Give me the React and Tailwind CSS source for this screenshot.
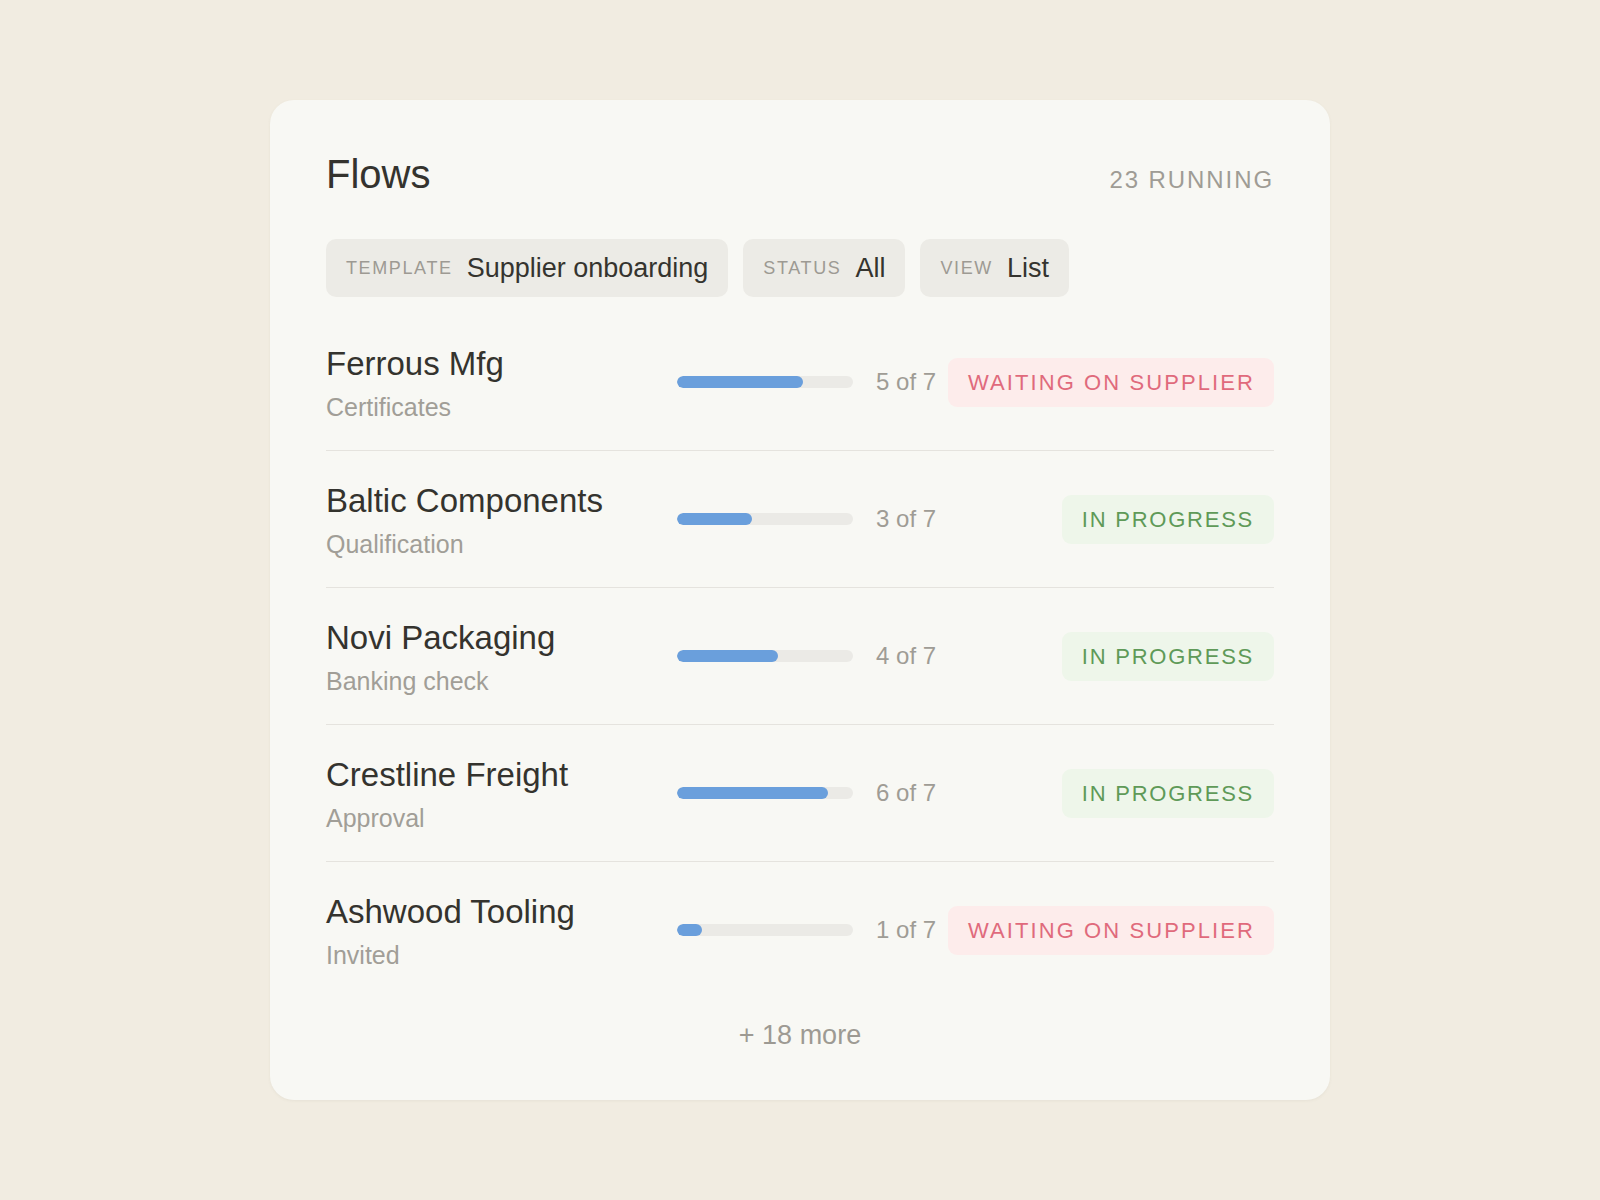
const filters = [
  { label: 'TEMPLATE', value: 'Supplier onboarding' },
  { label: 'STATUS', value: 'All' },
  { label: 'VIEW', value: 'List' },
];

const flows = [
  { name: 'Ferrous Mfg', step: 'Certificates', done: 5, status: 'waiting' },
  { name: 'Baltic Components', step: 'Qualification', done: 3, status: 'progress' },
  { name: 'Novi Packaging', step: 'Banking check', done: 4, status: 'progress' },
  { name: 'Crestline Freight', step: 'Approval', done: 6, status: 'progress' },
  { name: 'Ashwood Tooling', step: 'Invited', done: 1, status: 'waiting' },
];

const TOTAL = 7;

function StatusBadge({ status }) {
  if (status === 'waiting') {
    return (
      <span className="flex h-[49px] items-center rounded-[9px] bg-[#fdeceb] pl-[20px] pr-[19px] text-[22px] tracking-[0.095em] text-[#e06a7c]">
        WAITING ON SUPPLIER
      </span>
    );
  }
  return (
    <span className="flex h-[49px] items-center rounded-[9px] bg-[#eef6ea] px-[20px] text-[22px] tracking-[0.08em] text-[#5f9a58]">
      IN PROGRESS
    </span>
  );
}

function FlowRow({ flow, last }) {
  return (
    <div className={`flex items-center pt-[33px] pb-[29px] ${last ? '' : 'border-b border-[#e5e3de]'}`}>
      <div className="w-[351px] shrink-0">
        <div className="text-[33px] leading-[34px] text-[#34332e]">{flow.name}</div>
        <div className="mt-[12px] text-[25px] leading-[28px] text-[#a19e97]">{flow.step}</div>
      </div>
      {/* progress, count and status sit a touch above the row's middle */}
      <div className="mb-[4px] flex flex-1 items-center">
        <div className="h-[12px] w-[176px] shrink-0 overflow-hidden rounded-full bg-[#ebeae6]">
          <div className="h-full rounded-full bg-[#6a9fdc]" style={{ width: `${(flow.done / TOTAL) * 100}%` }} />
        </div>
        <span className="ml-[23px] text-[24px] text-[#9f9c95]">{flow.done} of {TOTAL}</span>
        <div className="ml-auto">
          <StatusBadge status={flow.status} />
        </div>
      </div>
    </div>
  );
}

export default function App() {
  return (
    <div className="flex min-h-screen items-center justify-center bg-[#f1ece1] font-['Liberation_Sans',Arial,sans-serif]">
      <div className="w-[1060px] rounded-[24px] bg-[#f8f8f4] px-[56px] pt-[51px] pb-[49px] shadow-[0_1px_3px_rgba(120,110,90,0.08)]">
        <div className="flex items-baseline justify-between">
          <h1 className="text-[40px] leading-[46px] text-[#34332e]">Flows</h1>
          <span className="text-[24px] tracking-[0.08em] text-[#9f9c95]">23 RUNNING</span>
        </div>

        <div className="mt-[41px] mb-[17px] flex gap-[15px]">
          {filters.map((f) => (
            <div key={f.label} className="flex h-[58px] items-center gap-[14px] rounded-[10px] bg-[#ecebe6] px-[20px]">
              <span className="text-[18px] tracking-[0.09em] text-[#9d9a93]">{f.label}</span>
              <span className="text-[27px] text-[#35342f]">{f.value}</span>
            </div>
          ))}
        </div>

        <div>
          {flows.map((flow, i) => (
            <FlowRow key={flow.name} flow={flow} last={i === flows.length - 1} />
          ))}
        </div>

        <div className="pt-[21px] text-center text-[27px] leading-[32px] text-[#9d9a93]">+ 18 more</div>
      </div>
    </div>
  );
}
